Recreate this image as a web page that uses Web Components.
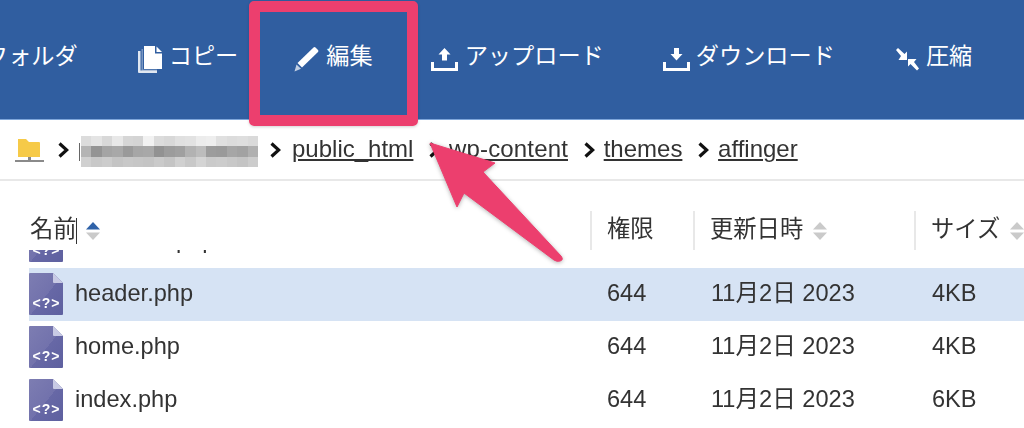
<!DOCTYPE html>
<html lang="ja">
<head>
<meta charset="utf-8">
<title>ファイルマネージャー</title>
<style>
  html, body { margin: 0; padding: 0; background: #fff; }
  body { width: 1024px; height: 428px; overflow: hidden; }
</style>
</head>
<body>
<file-manager>
  <fm-toolbar>
    <tool-button style="margin-left:-15px">フォルダ</tool-button>
    <tool-button icon="copy">コピー</tool-button>
    <tool-button icon="edit" style="margin-left:-5px">編集</tool-button>
    <tool-button icon="upload" style="margin-left:-2px;--gap:7px">アップロード</tool-button>
    <tool-button icon="download" style="margin-left:-1px">ダウンロード</tool-button>
    <tool-button icon="compress">圧縮</tool-button>
  </fm-toolbar>
  <fm-breadcrumb>
    <path-crumb>public_html</path-crumb>
    <path-crumb style="letter-spacing:.15px">wp-content</path-crumb>
    <path-crumb>themes</path-crumb>
    <path-crumb>affinger</path-crumb>
  </fm-breadcrumb>
  <fm-table>
    <file-row slot="rows" name="functions.php"></file-row>
    <file-row slot="rows" name="header.php" perm="644" date="11月2日 2023" size="4KB" selected></file-row>
    <file-row slot="rows" name="home.php" perm="644" date="11月2日 2023" size="4KB"></file-row>
    <file-row slot="rows" name="index.php" perm="644" date="11月2日 2023" size="6KB"></file-row>
  </fm-table>
  <callout-overlay></callout-overlay>
</file-manager>

<script>
const SANS = '"Liberation Sans", "Noto Sans CJK JP", sans-serif';

const TOOL_ICONS = {
  copy: `<svg width="25" height="27" viewBox="0 0 25 27" fill="#fff">
      <path d="M6 0h11v7.500h7V23H6z"/><path d="M18.500 0.500L24 6h-5.500z"/>
      <path d="M0 5h2.500v19.500H19V27H1a1 1 0 0 1-1-1z" opacity=".85"/>
      <path d="M3.500 3H5v20.500h14V25H3.500z" opacity=".35"/>
    </svg>`,
  edit: `<svg width="27" height="26" viewBox="0 0 27 26" fill="#fff">
      <path d="M20.500 1.500a1.500 1.500 0 0 1 2 0l2.500 2.500a1.500 1.500 0 0 1 0 2L9 21.500 4.500 17z"/>
      <path d="M3.500 18.500l4.500 4.300L1.500 25.500z" opacity=".7"/>
    </svg>`,
  upload: `<svg width="27" height="24" viewBox="0 0 27 24" fill="#fff">
      <path d="M13.500 1l6 6.500h-3.500v6h-5v-6H7.500z"/>
      <path d="M0 15h3v6h21v-6h3v9H0z"/>
    </svg>`,
  download: `<svg width="27" height="24" viewBox="0 0 27 24" fill="#fff">
      <path d="M11 1h5v6h3.500l-6 6.500-6-6.500H11z"/>
      <path d="M0 15h3v6h21v-6h3v9H0z"/>
    </svg>`,
  compress: `<svg width="25" height="24" viewBox="0 0 25 24" fill="#fff">
      <path d="M1 3L3 1l6.500 6L12 4.500V13H3.500L6 9z"/>
      <path d="M24 21.500L22 23.500l-6.500-6.500L13 19.500V12h8.500L19 15z"/>
    </svg>`
};

customElements.define('file-manager', class extends HTMLElement {
  constructor() {
    super();
    this.attachShadow({ mode: 'open' }).innerHTML = `
    <style>
      :host {
        display: block;
        position: relative;
        width: 1024px;
        height: 428px;
        overflow: hidden;
        font-family: ${SANS};
        color: #333;
        filter: blur(.45px);
      }
    </style>
    <slot></slot>
    `;
  }
});

customElements.define('fm-toolbar', class extends HTMLElement {
  constructor() {
    super();
    this.attachShadow({ mode: 'open' }).innerHTML = `
    <style>
      :host {
        display: flex;
        align-items: center;
        gap: 60px;
        height: 119px;
        background: #305ea0;
        border-bottom: 1px solid #7ea6da;
        color: #fff;
        white-space: nowrap;
      }
    </style>
    <slot></slot>
    `;
  }
});

customElements.define('tool-button', class extends HTMLElement {
  constructor() {
    super();
    const icon = TOOL_ICONS[this.getAttribute('icon')] || '';
    this.attachShadow({ mode: 'open' }).innerHTML = `
    <style>
      :host {
        display: flex;
        align-items: center;
        gap: var(--gap, 6px);
        font-size: 23.200px;
        line-height: 30px;
        flex: none;
      }
      svg { display: block; margin-top: -1px; }
      span { display: block; margin-top: -7px; }
    </style>
    ${icon}<span><slot></slot></span>
    `;
  }
});

const CHEVRON = `<svg width="11" height="16" viewBox="0 0 11 16" fill="none" stroke="#111" stroke-width="3.200"><path d="M1.500 1.500L8.700 8L1.500 14.500"/></svg>`;

customElements.define('fm-breadcrumb', class extends HTMLElement {
  constructor() {
    super();
    let mosaic = '';
    const shades = [
      'dcdcdc e4e4e4 d8d8d8 e8e8e8 d6d6d6 d4d4d4 f2f2f2 dcdcdc d8d8d8 e0e0e0 e2e2e2 ececec eeeeee e0e0e0 dcdcdc dedede dadada',
      'b4b4b4 949494 a4a4a4 a8a8a8 9a9a9a a6a6a6 a8a8a8 929292 9c9c9c a0a0a0 b2b2b2 bcbcbc 9c9c9c 9a9a9a a6a6a6 a2a2a2 b0b0b0',
      'd0d0d0 c8c8c8 cccccc c4c4c4 c8c8c8 c6c6c6 c4c4c4 cacaca c4c4c4 d0d0d0 c8c8c8 d4d4d4 cacaca cccccc c8c8c8 c4c4c4 cccccc'
    ];
    shades.forEach(row => row.split(' ').forEach(c => { mosaic += `<i style="background:#${c}"></i>`; }));
    this.attachShadow({ mode: 'open' }).innerHTML = `
    <style>
      :host {
        display: flex;
        align-items: center;
        height: 59px;
        padding-left: 15px;
        border-bottom: 2px solid #e8e8e8;
        font-size: 24px;
      }
      .home { display: block; margin-right: 14px; }
      .chev { display: block; margin-right: 10px; }
      .chev.last { margin-right: 11px; }
      .chev svg { display: block; }
      .bar { width: 1px; height: 18px; margin: 4px 1px 0 0; background: #666; }
      .mosaic {
        display: grid;
        grid-template-columns: repeat(17, 1fr);
        grid-auto-rows: 1fr;
        width: 177px;
        height: 31px;
        margin: 4px 12px 0 0;
      }
      .mosaic i { display: block; }
      ::slotted(path-crumb) { margin-right: 8.700px; }
    </style>
    <svg class="home" width="29" height="26" viewBox="0 0 29 26">
      <path d="M3 2h8l3 3h10a1 1 0 0 1 1 1v14H3z" fill="#f6ca48"/>
      <path d="M13 20h3v3h-3z" fill="#888"/>
      <path d="M0 23h29v2H0z" fill="#8a8a8a"/>
    </svg>
    <span class="chev">${CHEVRON}</span>
    <div class="bar"></div>
    <div class="mosaic" aria-hidden="true">${mosaic}</div>
    <span class="chev last">${CHEVRON}</span>
    <slot></slot>
    `;
  }
});

customElements.define('path-crumb', class extends HTMLElement {
  constructor() {
    super();
    const last = !this.nextElementSibling;
    this.attachShadow({ mode: 'open' }).innerHTML = `
    <style>
      :host { display: flex; align-items: center; flex: none; }
      a {
        color: #333;
        text-decoration: underline;
        text-underline-offset: 2px;
        text-decoration-thickness: 1.500px;
        line-height: 30px;
        margin-top: -1px;
      }
      svg { display: block; margin-left: 16px; }
    </style>
    <a href="#"><slot></slot></a>${last ? '' : CHEVRON}
    `;
  }
});

customElements.define('sort-arrows', class extends HTMLElement {
  constructor() {
    super();
    const up = this.hasAttribute('active') ? '#2f62a8' : '#cacaca';
    this.attachShadow({ mode: 'open' }).innerHTML = `
    <style>
      :host { display: inline-block; margin-left: 10px; flex: none; }
      svg { display: block; }
    </style>
    <svg width="14" height="18" viewBox="0 0 14 18">
      <path d="M7 0L14 7.500H0z" fill="${up}"/><path d="M0 10.500h14L7 18z" fill="#cacaca"/>
    </svg>
    `;
  }
});

customElements.define('fm-table', class extends HTMLElement {
  constructor() {
    super();
    this.attachShadow({ mode: 'open' }).innerHTML = `
    <style>
      :host {
        display: block;
        padding-top: 30px;
        font-size: 23.300px;
      }
      .head {
        display: grid;
        grid-template-columns: 561px 103px 221px 1fr;
        height: 39px;
        margin-left: 29px;
        line-height: 30px;
        white-space: nowrap;
      }
      .head div {
        display: flex;
        align-items: center;
        padding-left: 15px;
        border-left: 2px solid #e8e8e8;
        overflow: hidden;
      }
      .head div:first-child { padding-left: 1px; border-left: 0; }
      .head span { display: block; margin-bottom: 4px; }
      .head .caret { width: 1px; height: 26px; margin: 0 0 0 -1px; background: #333; flex: none; }
      .head .caret + sort-arrows { margin-left: 9px; }
      .list { height: 178px; overflow: hidden; }
      .list ::slotted(file-row:first-child) { margin-top: -35px; }
    </style>
    <div class="head">
      <div><span>名前</span><span class="caret"></span><sort-arrows active></sort-arrows></div>
      <div><span>権限</span></div>
      <div><span>更新日時</span><sort-arrows></sort-arrows></div>
      <div><span>サイズ</span><sort-arrows></sort-arrows></div>
    </div>
    <div class="list"><slot name="rows"></slot></div>
    `;
  }
});

customElements.define('file-row', class extends HTMLElement {
  constructor() {
    super();
    const get = k => this.getAttribute(k) || '';
    this.attachShadow({ mode: 'open' }).innerHTML = `
    <style>
      :host {
        display: grid;
        grid-template-columns: 562px 104px 221px 1fr;
        align-items: center;
        height: 53px;
        margin-left: 29px;
        font-size: 23.600px;
        line-height: 30px;
        white-space: nowrap;
      }
      :host([selected]) { background: #d6e3f4; }
      .name { display: flex; align-items: center; gap: 12px; }
      .name span { margin-bottom: 4px; }
      .num, .date { padding-left: 16px; margin-bottom: 4px; }
      svg { display: block; flex: none; margin-top: -1px; }
      text { font: bold 14px "Liberation Sans", sans-serif; fill: #fff; letter-spacing: 1px; }
    </style>
    <div class="name">
      <svg width="34" height="42" viewBox="0 0 34 42">
        <defs>
          <linearGradient id="g" x1="0" y1="0" x2="1" y2="1">
            <stop offset="0" stop-color="#7d7db2"/><stop offset=".52" stop-color="#7272ac"/>
            <stop offset=".52" stop-color="#6768a6"/><stop offset="1" stop-color="#5e609f"/>
          </linearGradient>
        </defs>
        <path d="M1 0h23l10 10v31a1 1 0 0 1-1 1H1a1 1 0 0 1-1-1V1a1 1 0 0 1 1-1z" fill="url(#g)"/>
        <path d="M24 0l10 10H25a1 1 0 0 1-1-1z" fill="#c8cae4"/>
        <text x="17.500" y="35" text-anchor="middle">&lt;?&gt;</text>
      </svg>
      <span>${get('name')}</span>
    </div>
    <div class="num">${get('perm')}</div>
    <div class="date">${get('date')}</div>
    <div class="num">${get('size')}</div>
    `;
  }
});

customElements.define('callout-overlay', class extends HTMLElement {
  constructor() {
    super();
    this.attachShadow({ mode: 'open' }).innerHTML = `
    <style>
      :host { position: absolute; inset: 0; pointer-events: none; }
      .box {
        position: absolute;
        left: 249px;
        top: 1px;
        width: 169px;
        height: 125px;
        box-sizing: border-box;
        border: 11px solid #ec3f6e;
        border-radius: 5px;
        box-shadow: 0 1px 3px rgba(0,0,0,.18);
      }
      svg { position: absolute; left: 0; top: 0; filter: drop-shadow(0 1px 2px rgba(0,0,0,.3)); }
    </style>
    <div class="box"></div>
    <svg width="1024" height="428" viewBox="0 0 1024 428">
      <path d="M430 143L495 163L483 172L561 256Q564 260 560 261Q557 262 554 260L464 193L457 207Z" fill="#ec3f6e" stroke="#ec3f6e" stroke-width="1" stroke-linejoin="round"/>
    </svg>
    `;
  }
});
</script>
</body>
</html>
